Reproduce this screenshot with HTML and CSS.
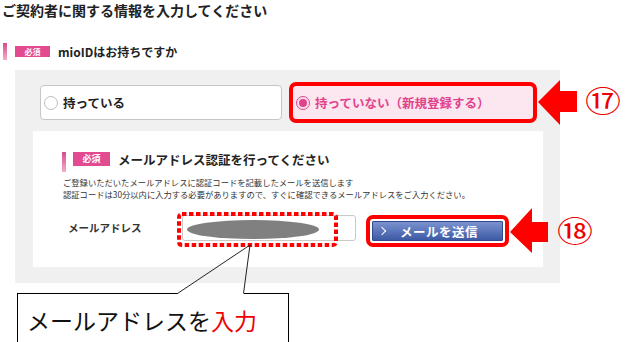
FILE: index.html
```html
<!DOCTYPE html>
<html>
<head>
    <title>ご契約者情報</title>
    <link rel="stylesheet" href="styles.css">
</head>
<body>
    <h1 class="page-title">ご契約者に関する情報を入力してください</h1>

    <div class="sec-head">
        <span class="bar"></span>
        <span class="badge">必須</span>
        <span class="sec-title">mioIDはお持ちですか</span>
    </div>

    <div class="panel">
        <div class="radio-row">
            <label class="radio-opt">
                <span class="dot"></span>
                持っている
            </label>
            <label class="radio-opt selected">
                <span class="dot"></span>
                持っていない（新規登録する）
            </label>
        </div>

        <div class="auth-box">
            <div class="auth-head">
                <span class="bar"></span>
                <span class="badge">必須</span>
                <span class="auth-title">メールアドレス認証を行ってください</span>
            </div>
            <p class="note">
                ご登録いただいたメールアドレスに認証コードを記載したメールを送信します<br>
                認証コードは30分以内に入力する必要がありますので、すぐに確認できるメールアドレスをご入力ください。
            </p>
            <div class="mail-row">
                <span class="mail-label">メールアドレス</span>
                <div class="mail-input">
                    <span class="blur"></span>
                    <svg class="dots" width="161" height="35">
                        <rect x="2" y="2" width="157" height="31" rx="3" fill="none" stroke="#f00" stroke-width="4" stroke-dasharray="4.5 2.5"/>
                    </svg>
                </div>
                <button class="send-btn"><span class="chev"></span>メールを送信</button>
            </div>
        </div>
    </div>

    <!-- 説明用の注記 -->
    <span class="num num17">⑰</span>
    <span class="num num18">⑱</span>

    <div class="callout">メールアドレスを<span class="red">入力</span></div>

    <svg class="marks" width="637" height="342">
        <polygon points="538,102 560,80 560,91 577,91 577,112 560,112 560,125" fill="#f00"/>
        <polygon points="510,232 532,208 532,222 548,222 548,242 532,242 532,253" fill="#f00"/>
        <line x1="177.5" y1="293.5" x2="250" y2="245" stroke="#222" stroke-width="1"/>
        <line x1="243.5" y1="293.5" x2="250" y2="245" stroke="#222" stroke-width="1"/>
    </svg>
</body>
</html>
```

FILE: styles.css
```css
body {
    font-family: "Noto Sans CJK JP", sans-serif;
    margin: 0;
    padding: 0;
    width: 637px;
    height: 342px;
    overflow: hidden;
    position: relative;
    background-color: #fff;
    color: #222;
}
.page-title {
    margin: 0;
    padding: 1px 0 0 2px;
    font-size: 14px;
    line-height: 18px;
    font-weight: bold;
    color: #222;
}
.sec-head {
    display: flex;
    align-items: center;
    margin-top: 24px;
    padding-left: 3px;
    height: 17px;
}
.bar {
    width: 4px;
    height: 17px;
    background: linear-gradient(#d84c8b, #f3aecb);
}
.badge {
    margin-left: 8px;
    width: 35px;
    height: 11px;
    line-height: 11px;
    background-color: #e24b8f;
    color: white;
    font-size: 8px;
    font-weight: bold;
    text-align: center;
}
.sec-title {
    margin-left: 8px;
    font-size: 12px;
    font-weight: bold;
}
.panel {
    margin: 10px 0 0 15px;
    width: 545px;
    box-sizing: border-box;
    padding: 15px 17px 16px 18px;
    background-color: #f0f0f0;
}
.radio-row {
    display: flex;
    gap: 10px;
    margin-left: 7px;
}
.radio-opt {
    display: flex;
    align-items: center;
    gap: 5px;
    width: 242px;
    height: 35px;
    box-sizing: border-box;
    padding-left: 3px;
    border: 1px solid #c6c6c6;
    border-radius: 4px;
    background-color: #fff;
    font-size: 12.5px;
    font-weight: bold;
    color: #222;
}
.dot {
    width: 14px;
    height: 14px;
    box-sizing: border-box;
    border: 1px solid #bdbdbd;
    border-radius: 50%;
    background-color: #fff;
    display: flex;
    align-items: center;
    justify-content: center;
}
.radio-opt.selected {
    background-color: #fce6f0;
    border-color: #ec9ec0;
    color: #e0438c;
    outline: 4px solid #f00;
    outline-offset: -1px;
}
.radio-opt.selected .dot {
    border-color: #e0438c;
    background-color: #fbe0ec;
}
.radio-opt.selected .dot::after {
    content: "";
    width: 8px;
    height: 8px;
    border-radius: 50%;
    background-color: #e0438c;
}
.auth-box {
    margin-top: 11px;
    width: 510px;
    height: 136px;
    box-sizing: border-box;
    padding: 21px 0 0 29px;
    background-color: #fff;
}
.auth-head {
    display: flex;
    align-items: flex-start;
    height: 20px;
}
.auth-head .bar {
    height: 20px;
}
.auth-head .badge {
    margin-left: 7px;
    width: 37px;
    height: 14px;
    line-height: 14px;
    font-size: 9px;
}
.auth-title {
    margin-left: 8px;
    font-size: 12.5px;
    line-height: 16px;
    font-weight: bold;
}
.note {
    margin: 4px 0 0 1px;
    font-size: 8.3px;
    line-height: 12px;
    color: #333;
}
.mail-row {
    display: flex;
    align-items: flex-end;
    margin-top: 15px;
    margin-left: 6px;
}
.mail-label {
    width: 114px;
    line-height: 26px;
    font-size: 10.5px;
    font-weight: bold;
    color: #333;
}
.mail-input {
    position: relative;
    width: 174px;
    height: 26px;
    box-sizing: border-box;
    border: 1px solid #c9c9c9;
    border-radius: 3px;
    background-color: #fff;
}
.blur {
    position: absolute;
    left: 4px;
    top: 4px;
    width: 132px;
    height: 19px;
    border-radius: 50%;
    background-color: #808080;
}
.dots {
    position: absolute;
    left: -6px;
    top: -4px;
}
.send-btn {
    display: flex;
    align-items: center;
    margin-left: 16px;
    width: 131px;
    height: 20px;
    padding: 0 0 0 6px;
    border: 1px solid #33498c;
    border-radius: 1px;
    background: linear-gradient(#7a92cf, #3d5aa5);
    color: white;
    font-family: "Noto Sans CJK JP", sans-serif;
    font-size: 12.5px;
    font-weight: bold;
    letter-spacing: 0.5px;
    outline: 4px solid #f00;
    outline-offset: 2px;
}
.chev {
    width: 5px;
    height: 5px;
    border-top: 1.5px solid white;
    border-right: 1.5px solid white;
    transform: rotate(45deg);
    margin-right: 15px;
}
.num {
    position: absolute;
    color: #e00;
    font-size: 36px;
    line-height: 36px;
    transform: scaleY(0.8);
}
.num17 {
    left: 585px;
    top: 81px;
}
.num18 {
    left: 557px;
    top: 211px;
}
.callout {
    position: absolute;
    left: 17px;
    top: 293px;
    width: 272px;
    height: 60px;
    box-sizing: border-box;
    padding: 11px 0 0 9px;
    border: 1px solid #000;
    background-color: #fff;
    font-size: 23px;
    line-height: 30px;
    color: #111;
}
.callout::before {
    content: "";
    position: absolute;
    left: 160px;
    top: -1px;
    width: 66px;
    height: 1px;
    background-color: #fff;
}
.callout .red {
    color: #e00;
}
.marks {
    position: absolute;
    left: 0;
    top: 0;
    pointer-events: none;
}
```
